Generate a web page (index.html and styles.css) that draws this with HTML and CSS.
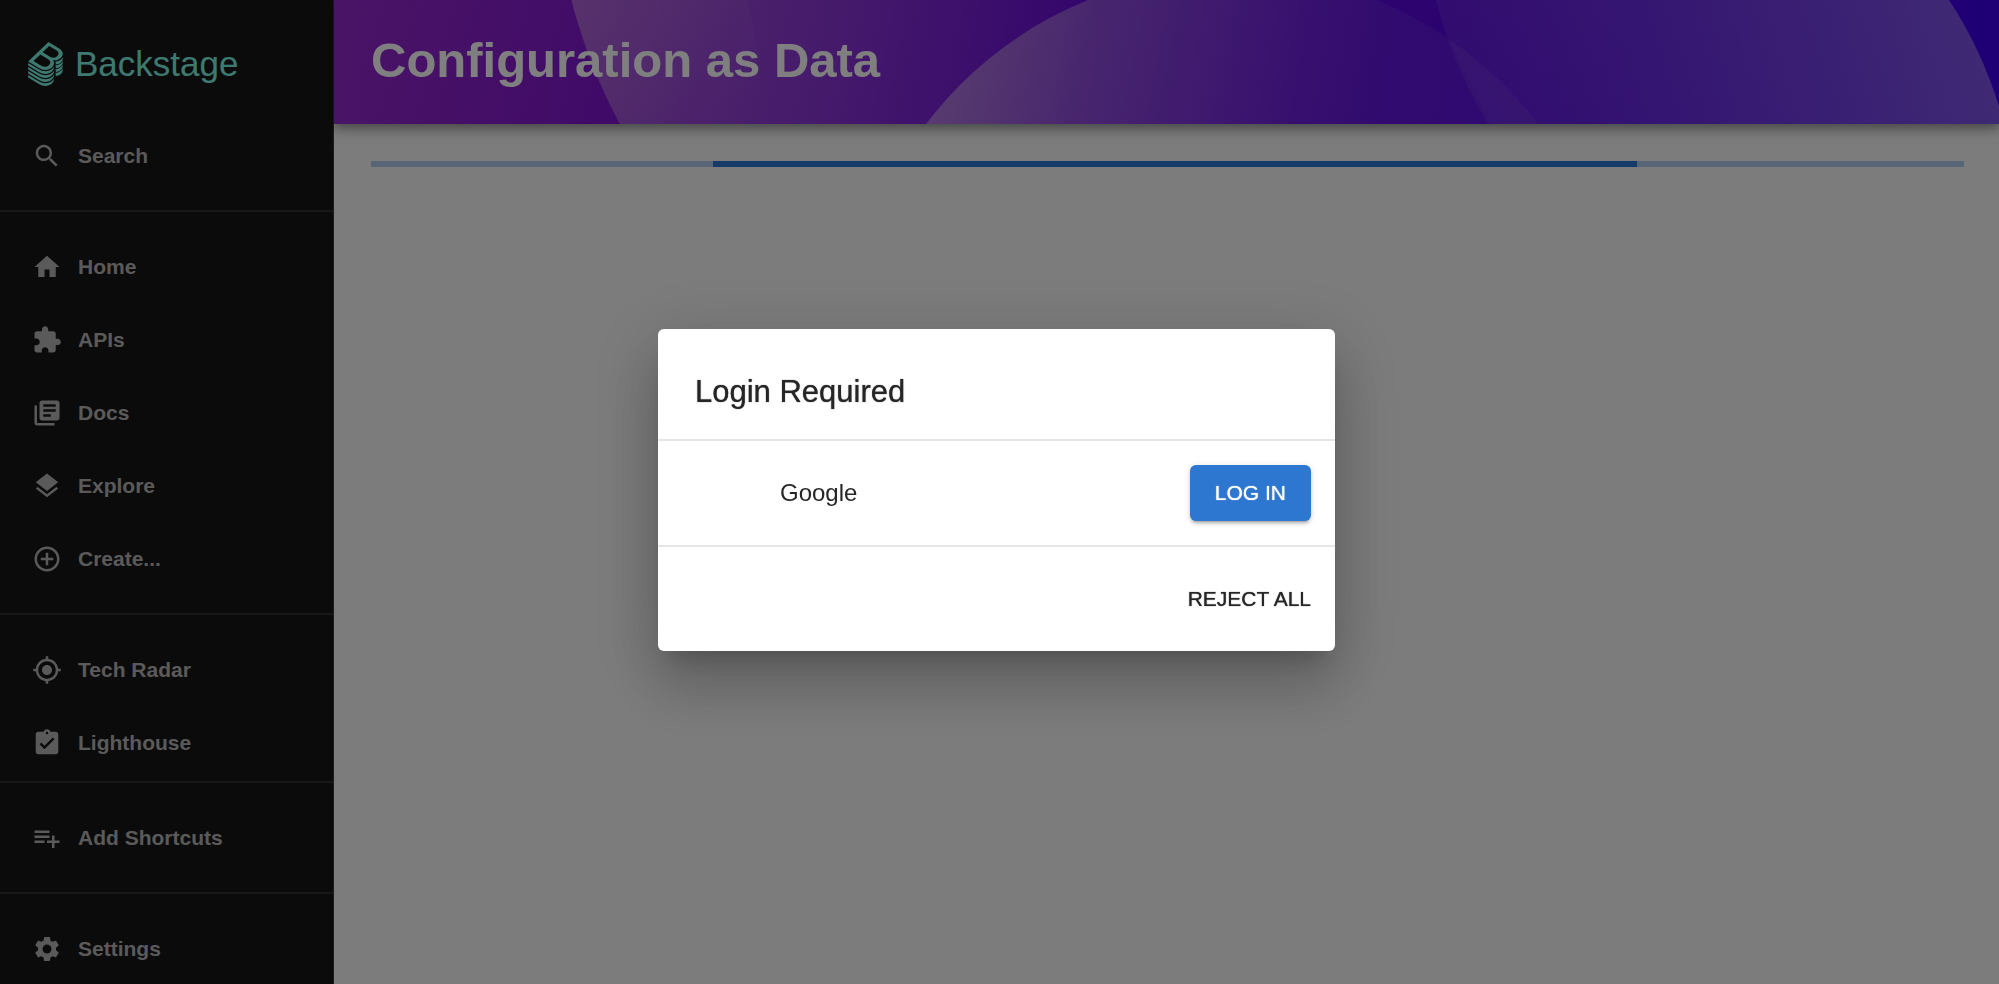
FILE: index.html
```html
<!DOCTYPE html>
<html lang="en">
<head>
<meta charset="utf-8">
<meta name="viewport" content="width=device-width, initial-scale=1">
<title>Configuration as Data</title>
<link rel="stylesheet" href="styles.css">
</head>
<body>
<div class="app">
  <nav class="sidebar" aria-label="Main">
    <a class="logo" href="#">
      <svg class="logo-mark" viewBox="0 0 338 429" aria-hidden="true">
        <defs>
          <path id="layer" d="M0,282.5v24.7L108.6,373.1a111.6,111.6,0,0,0,57.8,16.4c24.9,0,48.8-8.8,66.4-25.7,12.9-12.3,20-27.1,19.7-41.5v-1.8a87.3,87.3,0,0,1-11.2,13.1c-19.6,18.8-46.2,29.1-74.9,29.1a123.7,123.7,0,0,1-64.1-18.2Z"/>
          <path id="fold" d="M268,220C304,216 336,196 337,166V148C326,172 300,190 264,193C270,202 271,210 268,220Z"/>
        </defs>
        <path d="M303,166.05a80.69,80.69,0,0,0,13.45-10.37c.79-.77,1.55-1.53,2.3-2.3a83.12,83.12,0,0,0,7.93-9.38A63.69,63.69,0,0,0,333,133.23a48.58,48.58,0,0,0,4.35-16.4c1.49-19.39-10-38.67-35.62-54.22L198.56,0,78.3,115.23,0,190.25l108.6,65.91a111.59,111.59,0,0,0,57.76,16.41c24.92,0,48.8-8.8,66.42-25.69,19.16-18.36,25.52-42.12,13.7-61.87a49.22,49.22,0,0,0-6.8-8.87A89.17,89.17,0,0,0,259,178.29h.15a85.08,85.08,0,0,0,31-5.79A80.88,80.88,0,0,0,303,166.05ZM202.45,225.86c-19.32,18.51-50.4,21.23-75.7,5.9L51.61,186.15l67.45-64.64,76.41,46.38C223,184.58,221.49,207.61,202.45,225.86Zm8.93-82.22-70.65-42.89L205.14,39,274.51,81.1c25.94,15.72,29.31,37,10.55,55A60.69,60.69,0,0,1,211.38,143.64Z"/>
        <use href="#layer" y="-78"/><use href="#layer" y="-39"/><use href="#layer"/><use href="#layer" y="39"/>
        <use href="#fold"/><use href="#fold" y="37"/><use href="#fold" y="74"/><use href="#fold" y="111"/>
      </svg>
      <span>Backstage</span>
    </a>
    <button class="item" type="button">
      <svg viewBox="0 0 24 24" aria-hidden="true"><path d="M15.5 14h-.79l-.28-.27C15.41 12.59 16 11.11 16 9.500 16 5.910 13.090 3 9.500 3S3 5.910 3 9.500 5.910 16 9.500 16c1.610 0 3.090-.59 4.230-1.570l.27.28v.79l5 4.990L20.490 19l-4.990-5zm-6 0C7.010 14 5 11.990 5 9.500S7.010 5 9.500 5 14 7.010 14 9.500 11.990 14 9.500 14z"/></svg>
      <span>Search</span>
    </button>
    <hr class="divider">
    <a class="item" href="#">
      <svg viewBox="0 0 24 24" aria-hidden="true"><path d="M10 20v-6h4v6h5v-8h3L12 3 2 12h3v8z"/></svg>
      <span>Home</span>
    </a>
    <a class="item" href="#">
      <svg viewBox="0 0 24 24" aria-hidden="true"><path d="M20.500 11H19V7c0-1.100-.9-2-2-2h-4V3.500C13 2.120 11.880 1 10.500 1S8 2.120 8 3.500V5H4c-1.100 0-1.990.9-1.990 2v3.800H3.500c1.490 0 2.700 1.210 2.700 2.700s-1.210 2.700-2.700 2.700H2V20c0 1.100.9 2 2 2h3.800v-1.500c0-1.490 1.210-2.700 2.700-2.700 1.490 0 2.700 1.210 2.700 2.700V22H17c1.100 0 2-.9 2-2v-4h1.500c1.380 0 2.500-1.120 2.500-2.500S21.880 11 20.500 11z"/></svg>
      <span>APIs</span>
    </a>
    <a class="item" href="#">
      <svg viewBox="0 0 24 24" aria-hidden="true"><path d="M4 6H2v14c0 1.100.9 2 2 2h14v-2H4V6zm16-4H8c-1.100 0-2 .9-2 2v12c0 1.100.9 2 2 2h12c1.100 0 2-.9 2-2V4c0-1.100-.9-2-2-2zm-1 9H9V9h10v2zm-4 4H9v-2h6v2zm4-8H9V5h10v2z"/></svg>
      <span>Docs</span>
    </a>
    <a class="item" href="#">
      <svg viewBox="0 0 24 24" aria-hidden="true"><path d="M11.990 18.540l-7.370-5.730L3 14.070l9 7 9-7-1.630-1.270-7.380 5.740zM12 16l7.360-5.730L21 9l-9-7-9 7 1.630 1.270L12 16z"/></svg>
      <span>Explore</span>
    </a>
    <a class="item" href="#">
      <svg viewBox="0 0 24 24" aria-hidden="true"><path d="M13 7h-2v4H7v2h4v4h2v-4h4v-2h-4V7zm-1-5C6.480 2 2 6.480 2 12s4.480 10 10 10 10-4.480 10-10S17.520 2 12 2zm0 18c-4.410 0-8-3.590-8-8s3.590-8 8-8 8 3.590 8 8-3.590 8-8 8z"/></svg>
      <span>Create...</span>
    </a>
    <hr class="divider">
    <a class="item" href="#">
      <svg viewBox="0 0 24 24" aria-hidden="true"><path d="M12 8c-2.210 0-4 1.790-4 4s1.790 4 4 4 4-1.790 4-4-1.790-4-4-4zm8.940 3c-.46-4.170-3.770-7.480-7.940-7.940V1h-2v2.060C6.830 3.520 3.520 6.830 3.060 11H1v2h2.060c.46 4.170 3.770 7.480 7.940 7.940V23h2v-2.060c4.170-.46 7.480-3.770 7.940-7.940H23v-2h-2.060zM12 19c-3.870 0-7-3.130-7-7s3.130-7 7-7 7 3.130 7 7-3.130 7-7 7z"/></svg>
      <span>Tech Radar</span>
    </a>
    <a class="item" href="#">
      <svg viewBox="0 0 24 24" aria-hidden="true"><path d="M19 3h-4.180C14.400 1.840 13.300 1 12 1c-1.300 0-2.400.84-2.820 2H5c-1.100 0-2 .9-2 2v14c0 1.100.9 2 2 2h14c1.100 0 2-.9 2-2V5c0-1.100-.9-2-2-2zm-7 0c.55 0 1 .45 1 1s-.45 1-1 1-1-.45-1-1 .45-1 1-1zm-2 14l-4-4 1.410-1.410L10 14.170l6.590-6.590L18 9l-8 8z"/></svg>
      <span>Lighthouse</span>
    </a>
    <hr class="divider divider-tight">
    <button class="item" type="button">
      <svg viewBox="0 0 24 24" aria-hidden="true"><path d="M14 10H2v2h12v-2zm0-4H2v2h12V6zm4 8v-4h-2v4h-4v2h4v4h2v-4h4v-2h-4zM2 16h8v-2H2v2z"/></svg>
      <span>Add Shortcuts</span>
    </button>
    <hr class="divider">
    <a class="item" href="#">
      <svg viewBox="0 0 24 24" aria-hidden="true"><path d="M19.140 12.940c.04-.3.06-.61.06-.94 0-.32-.02-.64-.07-.94l2.030-1.580c.18-.14.23-.41.12-.61l-1.920-3.320c-.12-.22-.37-.29-.59-.22l-2.390.96c-.5-.38-1.030-.7-1.620-.94l-.36-2.540c-.04-.24-.24-.41-.48-.41h-3.840c-.24 0-.43.17-.47.41l-.36 2.540c-.59.24-1.130.57-1.620.94l-2.390-.96c-.22-.08-.47 0-.59.22L2.740 8.870c-.12.21-.08.47.12.61l2.030 1.580c-.05.3-.09.63-.09.94s.02.64.07.94l-2.030 1.580c-.18.14-.23.41-.12.61l1.920 3.320c.12.22.37.29.59.22l2.390-.96c.5.38 1.030.7 1.620.94l.36 2.540c.05.24.24.41.48.41h3.840c.24 0 .44-.17.47-.41l.36-2.540c.59-.24 1.130-.56 1.620-.94l2.390.96c.22.08.47 0 .59-.22l1.920-3.320c.12-.22.07-.47-.12-.61l-2.010-1.580zM12 15.600c-1.980 0-3.600-1.620-3.600-3.600s1.620-3.600 3.600-3.600 3.600 1.620 3.600 3.600-1.620 3.600-3.600 3.600z"/></svg>
      <span>Settings</span>
    </a>
  </nav>

  <main class="page">
    <header class="banner">
      <svg class="banner-art" viewBox="334 0 1665 124" preserveAspectRatio="none" aria-hidden="true">
        <defs>
          <linearGradient id="fadeA" gradientUnits="userSpaceOnUse" x1="334" y1="0" x2="720" y2="160"><stop offset="0" stop-color="#fffae6" stop-opacity=".1"/><stop offset="1" stop-color="#fffae6" stop-opacity="0"/></linearGradient>
          <linearGradient id="fadeA2" gradientUnits="userSpaceOnUse" x1="700" y1="0" x2="720" y2="110"><stop offset="0" stop-color="#fffae6" stop-opacity=".04"/><stop offset="1" stop-color="#fffae6" stop-opacity="0"/></linearGradient>
          <linearGradient id="fadeB" gradientUnits="userSpaceOnUse" x1="575" y1="0" x2="1080" y2="100"><stop offset="0" stop-color="#fffae6" stop-opacity=".3"/><stop offset=".5" stop-color="#fffae6" stop-opacity=".17"/><stop offset="1" stop-color="#fffae6" stop-opacity="0"/></linearGradient>
          <linearGradient id="fadeC" gradientUnits="userSpaceOnUse" x1="930" y1="60" x2="1380" y2="150"><stop offset="0" stop-color="#fffae6" stop-opacity=".4"/><stop offset=".8" stop-color="#fffae6" stop-opacity=".1"/><stop offset="1" stop-color="#fffae6" stop-opacity=".06"/></linearGradient>
          <linearGradient id="fadeD" gradientUnits="userSpaceOnUse" x1="1990" y1="20" x2="1480" y2="140"><stop offset="0" stop-color="#fffae6" stop-opacity=".34"/><stop offset="1" stop-color="#fffae6" stop-opacity=".06"/></linearGradient>
          <linearGradient id="fadeE" gradientUnits="userSpaceOnUse" x1="1430" y1="0" x2="1620" y2="70"><stop offset="0" stop-color="#fffae6" stop-opacity=".03"/><stop offset="1" stop-color="#fffae6" stop-opacity="0"/></linearGradient>
        </defs>
        <path fill="url(#fadeA)" d="M334 0H747Q760 50 767 124H334Z"/>
        <path fill="url(#fadeA2)" d="M572 0H747Q760 50 767 124H619Q584 60 572 0Z"/>
        <circle fill="url(#fadeB)" cx="1120" cy="-143" r="567"/>
        <circle fill="url(#fadeC)" cx="1232" cy="356" r="384"/>
        <path fill="url(#fadeD)" d="M1436 0H1949Q1986 56 2004 124H1488Q1450 60 1436 0Z"/>
        <circle fill="url(#fadeE)" cx="1917" cy="-144" r="502"/>
      </svg>
      <h1 class="banner-title">Configuration as Data</h1>
    </header>
    <div class="content">
      <div class="progress" role="progressbar" aria-label="Loading"><div class="progress-bar"></div></div>
    </div>
  </main>
</div>

<div class="backdrop">
  <div class="dialog" role="dialog" aria-modal="true" aria-labelledby="dialog-title">
    <h2 class="dialog-title" id="dialog-title">Login Required</h2>
    <ul class="providers">
      <li class="provider">
        <span class="provider-name">Google</span>
        <button class="btn btn-primary" type="button">LOG IN</button>
      </li>
    </ul>
    <div class="dialog-actions">
      <button class="btn" type="button">REJECT ALL</button>
    </div>
  </div>
</div>
</body>
</html>
```
FILE: styles.css
```css
* {
  box-sizing: border-box;
}

body {
  margin: 0;
  font-family: "Helvetica Neue", "Liberation Sans", Arial, sans-serif;
  background: #f8f8f8;
}

.app {
  display: flex;
  height: 100vh;
  overflow: hidden;
}

/* Sidebar */
.sidebar {
  flex: 0 0 334px;
  display: flex;
  flex-direction: column;
  background: #171717;
  border-right: 1px solid #383838;
  overflow: hidden;
}

.logo {
  display: flex;
  flex: none;
  align-items: center;
  gap: 12px;
  height: 119px;
  padding: 9px 0 0 28px;
  color: #7df3e1;
  font-size: 35px;
  line-height: 40px;
  text-decoration: none;
}

.logo-mark {
  width: 35px;
  height: 44px;
  fill: currentColor;
}

.item {
  display: flex;
  flex: none;
  align-items: center;
  gap: 16px;
  height: 73px;
  padding: 0 0 0 32px;
  border: 0;
  background: none;
  color: #b5b5b5;
  font-family: inherit;
  font-size: 21px;
  font-weight: 700;
  text-align: left;
  text-decoration: none;
}

.item svg {
  width: 30px;
  height: 30px;
  fill: currentColor;
}

.divider {
  flex: none;
  width: 100%;
  height: 2px;
  margin: 18px 0;
  border: 0;
  background: #303030;
}

.divider-tight {
  margin-top: 2px;
}

/* Page */
.page {
  flex: 1;
  min-width: 0;
}

.banner {
  position: relative;
  display: flex;
  align-items: center;
  height: 124px;
  padding: 0 37px 4px;
  background: linear-gradient(95deg, #8912ca, #3e00ea);
  box-shadow: 0 3px 12px 1px rgba(20, 20, 20, 0.5);
}

.banner-art {
  position: absolute;
  inset: 0;
  width: 100%;
  height: 100%;
}

.banner-title {
  position: relative;
  margin: 0;
  color: #fff;
  font-size: 49px;
  line-height: 56px;
}

.content {
  padding: 37px 35px 37px 37px;
}

.progress {
  height: 6px;
  background: #b0cbed;
}

.progress-bar {
  width: 58%;
  height: 100%;
  margin-left: 21.5%;
  background: #2e77d0;
}

/* Login dialog */
.backdrop {
  position: fixed;
  inset: 0;
  display: flex;
  align-items: center;
  justify-content: center;
  padding: 0 6px 4px 0;
  background: rgba(0, 0, 0, 0.5);
}

.dialog {
  width: 677px;
  max-width: 90%;
  border-radius: 6px;
  background: #fff;
  color: #262626;
  box-shadow: 0 17px 23px -11px rgba(0, 0, 0, 0.2),
    0 37px 58px 5px rgba(0, 0, 0, 0.14),
    0 14px 70px 12px rgba(0, 0, 0, 0.12);
}

.dialog-title {
  margin: 0;
  padding: 43px 37px 27px;
  font-size: 31px;
  line-height: 40px;
  font-weight: 400;
  text-shadow: 0 0 1px currentColor;
}

.providers {
  margin: 0;
  padding: 0;
  list-style: none;
  border-top: 2px solid #e6e6e6;
}

.provider {
  display: flex;
  align-items: center;
  justify-content: space-between;
  padding: 24px 24px 24px 122px;
  border-bottom: 2px solid #e6e6e6;
}

.provider-name {
  font-size: 24px;
}

.dialog-actions {
  display: flex;
  justify-content: flex-end;
  padding: 24px;
}

.btn {
  height: 56px;
  padding: 0;
  border: 0;
  border-radius: 6px;
  background: none;
  color: #262626;
  font-family: inherit;
  font-size: 21px;
  text-shadow: 0 0 1px currentColor;
}

.btn-primary {
  padding: 0 25px;
  background: #2e77d0;
  color: #fff;
  box-shadow: 0 4px 2px -3px rgba(0, 0, 0, 0.2),
    0 3px 3px rgba(0, 0, 0, 0.14),
    0 1px 7px rgba(0, 0, 0, 0.12);
}
```
